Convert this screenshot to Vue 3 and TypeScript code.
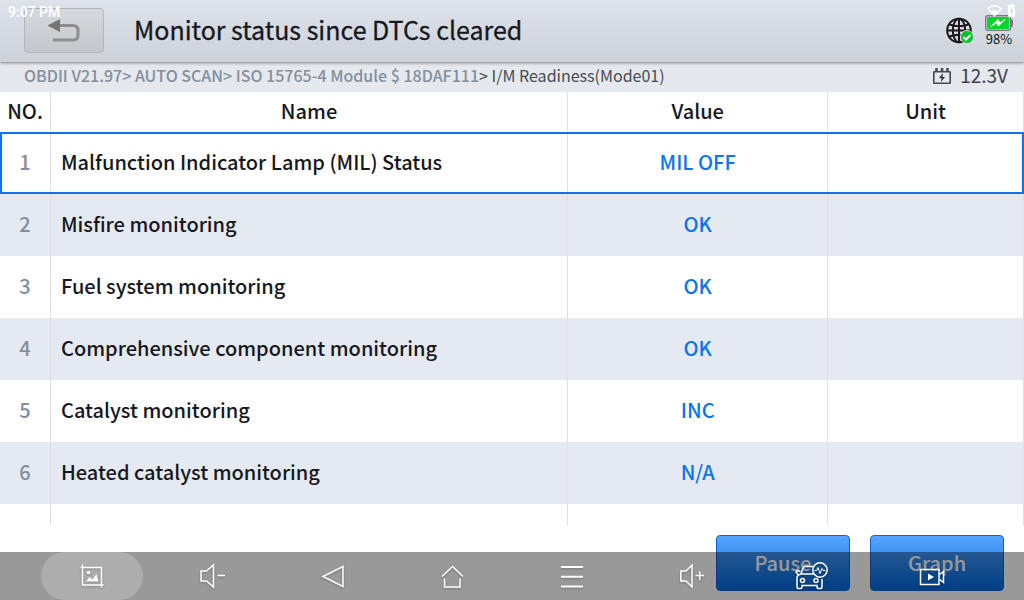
<script setup lang="ts">
import { ref } from 'vue'

interface Monitor {
  no: number
  name: string
  value: string
  unit: string
}

const monitors: Monitor[] = [
  { no: 1, name: 'Malfunction Indicator Lamp (MIL) Status', value: 'MIL OFF', unit: '' },
  { no: 2, name: 'Misfire monitoring', value: 'OK', unit: '' },
  { no: 3, name: 'Fuel system monitoring', value: 'OK', unit: '' },
  { no: 4, name: 'Comprehensive component monitoring', value: 'OK', unit: '' },
  { no: 5, name: 'Catalyst monitoring', value: 'INC', unit: '' },
  { no: 6, name: 'Heated catalyst monitoring', value: 'N/A', unit: '' },
]

const selected = ref<number>(1)
</script>

<template>
  <div class="screen">
    <header class="title-bar">
      <button class="back" type="button" aria-label="Back">
        <svg width="34" height="26" viewBox="0 0 34 26">
          <path d="M12 8.500h14q5 0 5 5v4.500q0 5-5 5H6" fill="none" stroke="#8e8e8e" stroke-width="3" />
          <path d="M0.500 8.500L13 2v13z" fill="#757575" />
        </svg>
      </button>
      <h1>Monitor status since DTCs cleared</h1>
      <div class="indicators">
        <svg width="28" height="28" viewBox="0 0 28 28" aria-label="Network connected">
          <g fill="none" stroke="#1c1718" stroke-width="2">
            <circle cx="13" cy="13.500" r="11.800" />
            <ellipse cx="13" cy="13.500" rx="6.200" ry="11.800" />
            <path d="M13 2v23M1.500 13.500h23M3.500 7.500q9.500 3.500 19 0M3.500 19.500q9.500-3.500 19 0" />
          </g>
          <circle cx="21" cy="20" r="6.500" fill="#05c12e" stroke="#d7dbe2" stroke-width="1" />
          <path d="M17.500 20l2.500 2.500 4.500-4.500" fill="none" stroke="#fff" stroke-width="2" />
        </svg>
        <div class="battery">
          <svg width="28" height="16" viewBox="0 0 28 16" aria-hidden="true">
            <rect x="0.700" y="0.700" width="24.600" height="14.600" rx="2" fill="#e7e9ee" stroke="#777b81" stroke-width="1.400" />
            <rect x="2" y="2" width="22" height="12" rx="1" fill="#00d62c" />
            <path d="M26 3.500q2 .5 2 2.500v4q0 2-2 2.500z" fill="#777b81" />
            <path d="M6 11.500l7-7 2 3.500 5-3.500-6.500 6.500-2-3z" fill="#fff" stroke="#fff" />
          </svg>
          <span>98%</span>
        </div>
      </div>
    </header>

    <div class="path-bar">
      <nav aria-label="Breadcrumb">
        <span class="trail">OBDII V21.97&gt; AUTO SCAN&gt; ISO 15765-4 Module $ 18DAF111</span><span>&gt; I/M Readiness(Mode01)</span>
      </nav>
      <div class="voltage">
        <svg width="18" height="18" viewBox="0 0 18 18" aria-hidden="true">
          <rect x="0.800" y="5.800" width="16.400" height="11.400" rx="0.500" fill="none" stroke="#454857" stroke-width="1.600" />
          <path d="M3.500 2v4M9 2v4M14.500 2v4" stroke="#454857" stroke-width="2.500" />
          <path d="M10 7l-4 5h2.500L8 16l4-5H9.500z" fill="#303341" />
        </svg>
        <span>12.3V</span>
      </div>
    </div>

    <main>
      <table>
        <colgroup>
          <col class="col-no" />
          <col class="col-name" />
          <col class="col-value" />
          <col />
        </colgroup>
        <thead>
          <tr>
            <th scope="col">NO.</th>
            <th scope="col">Name</th>
            <th scope="col">Value</th>
            <th scope="col">Unit</th>
          </tr>
        </thead>
        <tbody>
          <tr
            v-for="m in monitors"
            :key="m.no"
            :class="{ selected: m.no === selected }"
            @click="selected = m.no"
          >
            <td class="no">{{ m.no }}</td>
            <td class="name">{{ m.name }}</td>
            <td class="value">{{ m.value }}</td>
            <td>{{ m.unit }}</td>
          </tr>
          <tr>
            <td></td>
            <td></td>
            <td></td>
            <td></td>
          </tr>
        </tbody>
      </table>
    </main>

    <footer>
      <button class="action" type="button">Pause</button>
      <button class="action" type="button">Graph</button>
    </footer>

    <div class="status-bar">
      <span>9:07 PM</span>
      <svg width="30" height="14" viewBox="0 0 30 14" aria-hidden="true">
        <path d="M0.800 4.500Q7.500-1 14.200 4.500L7.500 12z" fill="none" stroke="#fff" stroke-width="1.300" />
        <path d="M3.500 7.500Q7.500 4.500 11.500 7.500L7.500 12z" fill="#fff" />
        <path d="M22 1h1.500V0h3v1H28v12h-7V1z" fill="#fff" />
        <path d="M25 3.500L22.800 7.500h1.500v3L26.400 6.500H25z" fill="#cfd3da" />
      </svg>
    </div>

    <nav class="system-nav" aria-label="System">
      <button class="active" type="button" aria-label="Screenshot">
        <svg width="32" height="32" viewBox="0 0 32 32">
          <path d="M6.500 4.500v20.500h21M4.500 7.500h21v20" />
          <circle cx="12.500" cy="12.500" r="1.700" class="solid" />
          <path d="M10 21.500l3.500-4.500 3 2.500 4-5.500 2 7.500z" class="solid" />
        </svg>
      </button>
      <button type="button" aria-label="Volume down">
        <svg width="32" height="32" viewBox="0 0 32 32">
          <path d="M5 11h5.500l7-6v22l-7-6H5zM21.500 15.500h7.500" />
        </svg>
      </button>
      <button type="button" aria-label="Back">
        <svg width="32" height="32" viewBox="0 0 32 32">
          <path d="M7 16.500L27 6.500v20z" />
        </svg>
      </button>
      <button type="button" aria-label="Home">
        <svg width="32" height="32" viewBox="0 0 32 32">
          <path d="M6 16.500L16.500 6.500 27 16.500M8.500 18.500v8.500H24v-8.500" />
        </svg>
      </button>
      <button type="button" aria-label="Recent apps">
        <svg width="32" height="32" viewBox="0 0 32 32">
          <path d="M5 7h22M5 16.700h22M5 26.500h22" class="bold" />
        </svg>
      </button>
      <button type="button" aria-label="Volume up">
        <svg width="32" height="32" viewBox="0 0 32 32">
          <path d="M4.800 11h5.200l6-6v22l-6-6H4.800zM19.500 15.500h8.500M23.700 11.500v8.500" />
        </svg>
      </button>
      <button type="button" aria-label="Vehicle diagnostics">
        <svg width="36" height="32" viewBox="0 0 36 32">
          <path d="M19 6.500h-7.500q-2 0-2.700 2L7 14h13M7 14Q3 15 3 18v9q0 1.500 1.500 1.500h2Q8 28.500 8 27v-1.500h15V27q0 1.500 1.500 1.500h2Q28 28.500 28 27v-8M6.500 11.500L3 10.500 2 12l2 2.500" />
          <circle cx="8.500" cy="20.500" r="2" />
          <circle cx="22" cy="20.500" r="2" />
          <circle cx="26" cy="10" r="7.200" />
          <path d="M20.500 10.500h2l1.500-3 2 6 2-5 1 2h2.500" class="thin" />
        </svg>
      </button>
      <button type="button" aria-label="Screen recording">
        <svg width="32" height="32" viewBox="0 0 32 32">
          <path d="M4.500 9.500H23v15H4.500zM23 15l4.500-3.500v11L23 19" />
          <path d="M12 13.500v7l6-3.500z" class="solid" />
        </svg>
      </button>
    </nav>
  </div>
</template>

<style>
body {
  margin: 0;
}
</style>

<style scoped>
.screen {
  display: flex;
  flex-direction: column;
  height: 100vh;
  overflow: hidden;
  position: relative;
  background: #fff;
  color: #16181e;
  font-family: "Noto Sans CJK SC", "Noto Sans", sans-serif;
  font-weight: 500;
}

button {
  font: inherit;
  padding: 0;
  cursor: pointer;
}

svg {
  display: block;
  flex: none;
}

.title-bar {
  display: flex;
  align-items: center;
  flex: none;
  box-sizing: border-box;
  height: 62px;
  padding: 0 11px 2px 24px;
  background: linear-gradient(#dee2ea, #cdd1d8);
  box-shadow: 0 1px 3px rgba(0, 0, 0, 0.45);
  position: relative;
}

.back {
  display: flex;
  align-items: center;
  justify-content: center;
  box-sizing: border-box;
  width: 80px;
  height: 45px;
  border: 1px solid #b3b6ba;
  border-radius: 4px;
  background: linear-gradient(#d5d9de, #c4c7cb);
}

h1 {
  flex: 1;
  margin: 0 0 0 30px;
  padding-bottom: 2px;
  font-size: 25px;
  line-height: 38px;
  font-weight: 400;
  -webkit-text-stroke: 0.3px currentColor;
}

.indicators {
  display: flex;
  align-items: center;
  gap: 11px;
  padding-top: 2px;
}

.battery {
  display: flex;
  flex-direction: column;
  align-items: center;
  font-size: 13px;
  line-height: 16px;
  font-weight: 400;
}

.path-bar {
  display: flex;
  align-items: center;
  justify-content: space-between;
  flex: none;
  box-sizing: border-box;
  height: 30px;
  padding: 0 16px 4px 24px;
  background: #e5e8ed;
  color: #454c55;
  font-size: 16px;
  line-height: 26px;
  font-weight: 400;
}

.trail {
  color: #838f9d;
  font-weight: 500;
}

.voltage {
  display: flex;
  align-items: center;
  gap: 9px;
  color: #3d4150;
  font-size: 19px;
}

main {
  flex: 1;
  min-height: 0;
  overflow: hidden;
}

table {
  width: 100%;
  table-layout: fixed;
  border-collapse: separate;
  border-spacing: 0;
  font-size: 20px;
  line-height: 30px;
}

.col-no {
  width: 51px;
}

.col-name {
  width: 50.5%;
}

.col-value {
  width: 25.4%;
}

th,
td {
  box-sizing: border-box;
  padding: 0 0 2px;
  border-right: 1px solid #e0e0e0;
  font-weight: 500;
  text-align: center;
}

th {
  height: 40px;
}

td {
  height: 62px;
}

tbody tr:nth-child(even) {
  background: #e5e9f1;
}

.selected {
  outline: 2px solid #0a73ee;
  outline-offset: -2px;
}

td.no {
  color: #838f9d;
}

td.name {
  padding-left: 10px;
  text-align: left;
}

td.value {
  color: #0a73ee;
}

footer {
  display: flex;
  justify-content: flex-end;
  gap: 20px;
  flex: none;
  padding: 10px 20px 9px;
}

.action {
  width: 134px;
  height: 56px;
  padding-bottom: 2px;
  border: 1px solid #0864d2;
  border-radius: 4px;
  background: linear-gradient(#58a5ff, #0068dc);
  color: #fff;
  font-size: 20px;
}

.status-bar {
  position: absolute;
  inset: 4px 7px auto 8px;
  display: flex;
  justify-content: space-between;
  color: #fff;
  font-family: Roboto, sans-serif;
  font-size: 14px;
  line-height: 16px;
  pointer-events: none;
}

.system-nav {
  position: absolute;
  inset: auto 0 0;
  display: flex;
  box-sizing: border-box;
  height: 48px;
  padding: 0 32px;
  background: rgba(0, 0, 0, 0.4);
}

.system-nav button {
  flex: 1;
  display: flex;
  align-items: center;
  justify-content: center;
  margin: 0 9px;
  border: 0;
  border-radius: 24px;
  background: none;
}

.system-nav .active {
  background: rgba(255, 255, 255, 0.2);
}

.system-nav svg {
  fill: none;
  stroke: #fff;
  stroke-width: 1.5;
  filter: drop-shadow(0 1px 1px rgba(0, 0, 0, 0.25));
}

.system-nav .solid {
  fill: #fff;
  stroke: none;
}

.system-nav .bold {
  stroke-width: 2;
}

.system-nav .thin {
  stroke-width: 1;
}
</style>
